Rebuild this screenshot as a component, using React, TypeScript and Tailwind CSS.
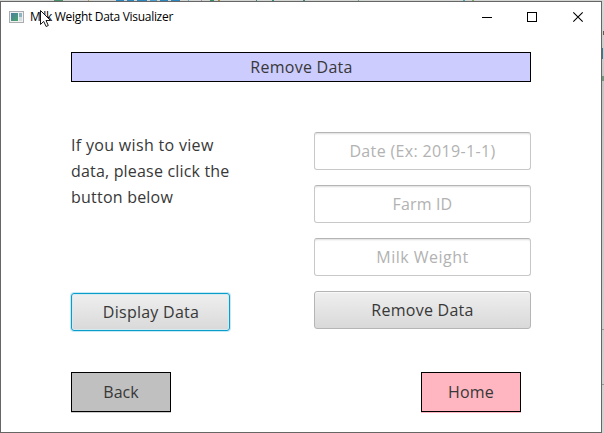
import React from "react";

const topSpecks = [
  { left: 54, width: 9, color: "#4a8f68" },
  { left: 88, width: 1, color: "#c59a55" },
  { left: 116, width: 8, color: "#2c86bd" },
  { left: 127, width: 7, color: "#2c86bd" },
  { left: 137, width: 10, color: "#2c86bd" },
  { left: 150, width: 7, color: "#4a9ccb" },
  { left: 160, width: 8, color: "#2c86bd" },
  { left: 171, width: 9, color: "#2c86bd" },
  { left: 188, width: 1, color: "#66aacb" },
  { left: 201, width: 1, color: "#b28cae" },
  { left: 210, width: 4, color: "#398b62" },
  { left: 218, width: 2, color: "#a48d42" },
  { left: 256, width: 1, color: "#398b80" },
  { left: 272, width: 2, color: "#398b80" },
  { left: 303, width: 2, color: "#398b80" },
  { left: 358, width: 1, color: "#70a58d" },
  { left: 463, width: 2, color: "#4ba7b0" },
  { left: 472, width: 2, color: "#81a56d" },
];

function TitleBar() {
  return (
    <header className="relative flex h-[30px] shrink-0 items-center pl-2 text-black">
      <svg width="15" height="12" viewBox="0 0 15 12" className="mb-px block" shapeRendering="crispEdges">
        <defs>
          <linearGradient id="app" x1="0" y1="0" x2="1" y2="1">
            <stop offset="0" stopColor="#4b7da3" />
            <stop offset="1" stopColor="#4aa66a" />
          </linearGradient>
        </defs>
        <rect x=".5" y=".5" width="14" height="11" fill="#f1f1f1" stroke="#a9adb0" />
        <rect x="2" y="2" width="7" height="8" fill="url(#app)" />
        <rect x="10" y="2" width="3" height="4" fill="#8db4c0" />
        <rect x="10" y="6" width="3" height="4" fill="#d2dfe0" />
      </svg>
      <h1 className="ml-[6px] whitespace-nowrap font-['Open_Sans','Noto_Sans',sans-serif] text-[12px] leading-[16px] tracking-[-0.3px]">
        Milk Weight Data Visualizer
      </h1>
      <svg className="ml-auto mr-3 block" width="107" height="12" viewBox="0 0 107 12" fill="none" stroke="black">
        <path d="M0 6.5h10M45.5 1.5h9v9h-9z" shapeRendering="crispEdges" />
        <path d="M91.3 1.3l9.4 9.4M100.7 1.3l-9.4 9.4" strokeWidth="1.1" />
      </svg>
      <svg className="absolute left-[38px] top-[7px]" width="13" height="19" viewBox="0 0 13 19">
        <path d="M1.5 1.5v14l3.2-3.1 2.4 5.1 2.2-1-2.3-5h4.5z" fill="white" stroke="#151515" />
      </svg>
    </header>
  );
}

function Field({ label, tracking }: { label: string; tracking: string }) {
  return (
    <input
      aria-label={label}
      placeholder={label}
      className={`block h-[38px] w-[217px] rounded-[3px] border border-[#c8c8c8] border-t-[#b5b5b5] bg-white text-center leading-[26px] shadow-[inset_0_2px_2px_-1px_#dddddd] outline-none placeholder:text-[#b2b2b2] ${tracking}`}
    />
  );
}

export default function App() {
  return (
    <div className="relative h-[433px] w-[604px] overflow-hidden bg-[#c9c9c9] pt-px font-['Open_Sans','Noto_Sans',sans-serif] text-[16px] leading-[26px] text-[#383838]">
      <div className="absolute inset-x-0 top-0 h-px bg-[#d3d5d3]">
        {topSpecks.map((s) => (
          <i key={s.left} className="absolute top-0 h-px" style={{ left: s.left, width: s.width, backgroundColor: s.color }} />
        ))}
      </div>
      <div className="absolute right-0 top-0 h-full w-[2px] bg-gradient-to-b from-[#d8d8d8] via-[#c5c5c5] via-20% to-[#d3d3d3]">
        <i className="absolute right-0 top-[31px] h-[4px] w-px bg-[#665b48]" />
        <i className="absolute left-0 top-[48px] h-[11px] w-px bg-[#397c91]" />
        <i className="absolute right-0 top-[76px] h-[5px] w-[2px] bg-[#70977b]" />
        <i className="absolute right-0 top-[329px] h-px w-[2px] bg-[#999999]" />
        <i className="absolute right-0 top-[384px] h-px w-[2px] bg-[#999999]" />
      </div>
      <main className="relative flex h-[432px] w-[602px] flex-col border border-[#666666] bg-white">
        <TitleBar />
        <div className="ml-[70px] mt-5 flex h-[30px] w-[460px] items-center justify-center border border-black bg-[#ccccff] pl-px tracking-[0.25px]">
          Remove Data
        </div>
        <section className="ml-[70px] mt-[50px] flex w-[460px] justify-between">
          <div className="flex h-[199px] w-[170px] flex-col justify-between">
            <p className="whitespace-nowrap">
              <span className="block tracking-[0.32px]">If you wish to view</span>
              <span className="block tracking-[0.18px]">data, please click the</span>
              <span className="block tracking-[0.22px]">button below</span>
            </p>
            <button className="h-[38px] w-[159px] rounded-[3px] border border-[#0a9dcc] bg-gradient-to-b from-[#efefef] to-[#d9d9d9] pl-px tracking-[0.25px] shadow-[0_0_0_1px_#c5e9f5,inset_0_0_0_1px_#d4eaf1]">
              Display Data
            </button>
          </div>
          <div className="flex flex-col gap-[15px]">
            <Field label="Date (Ex: 2019-1-1)" tracking="tracking-[0.35px]" />
            <Field label="Farm ID" tracking="tracking-[0.15px]" />
            <Field label="Milk Weight" tracking="tracking-[0.5px]" />
            <button className="h-[38px] w-[217px] rounded-[3px] border border-[#b5b5b5] bg-gradient-to-b from-[#efefef] to-[#d9d9d9] tracking-[0.25px] shadow-[inset_0_1px_0_#f8f8f8]">
              Remove Data
            </button>
          </div>
        </section>
        <footer className="ml-[70px] mt-[41px] flex w-[450px] justify-between">
          <button className="h-10 w-[100px] border border-black bg-[#c0c0c0] shadow-[0_1px_0_#cccccc]">Back</button>
          <button className="h-10 w-[100px] border border-black bg-[#ffb6c1] tracking-[0.2px] shadow-[0_1px_0_#ffb6c1]">Home</button>
        </footer>
      </main>
    </div>
  );
}
